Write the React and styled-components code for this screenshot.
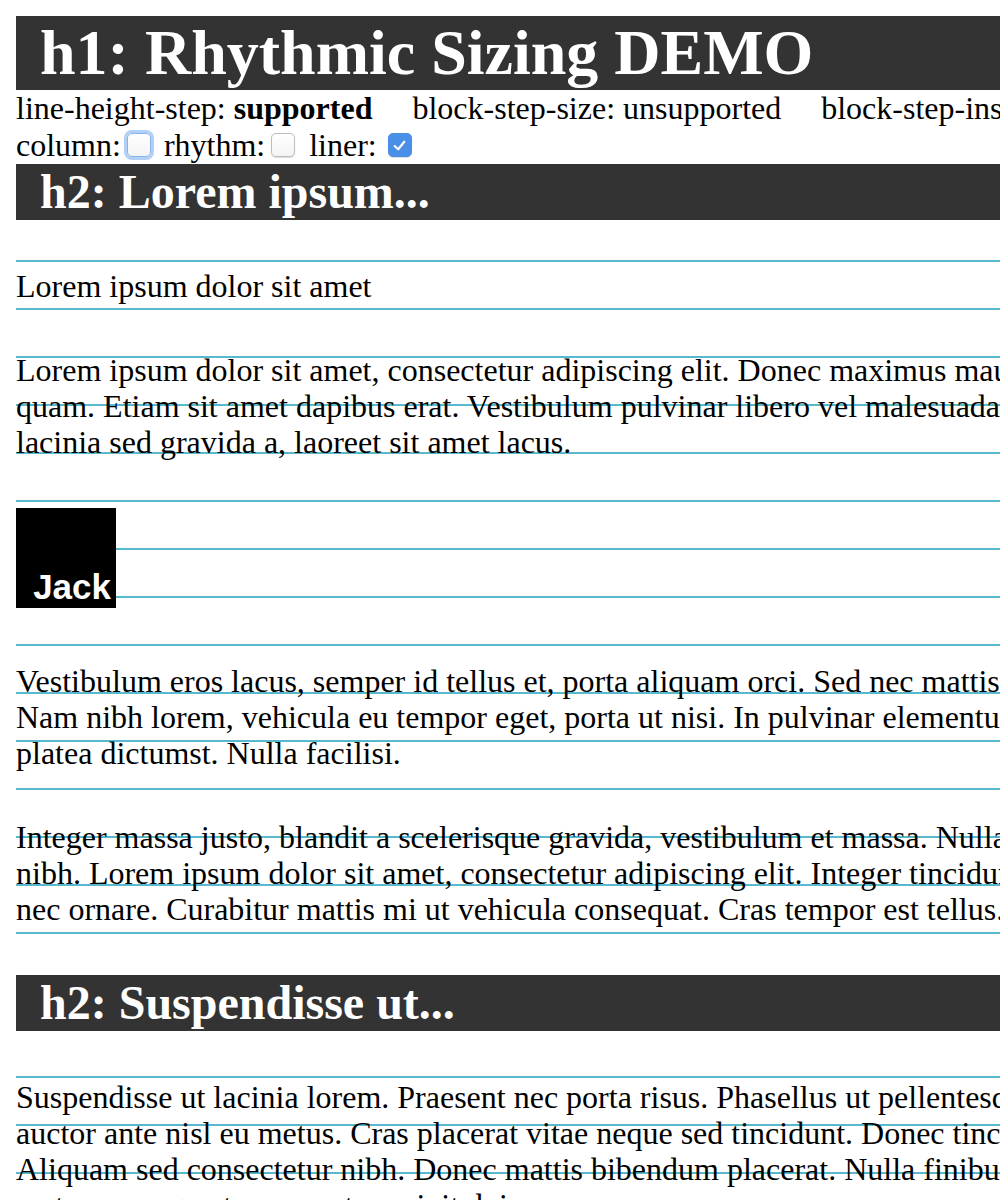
import React, { useState } from "react";
import styled, { createGlobalStyle } from "styled-components";

const GlobalStyle = createGlobalStyle`
  html, body {
    margin: 0;
    padding: 0;
    background: #ffffff;
    overflow-x: hidden;
  }
  body {
    font-family: "Liberation Serif", "Times New Roman", serif;
    font-size: 32px;
    color: #000;
  }
`;

const Page = styled.div`
  width: 1500px;
  padding: 16px 0 0 16px;
`;

const Title = styled.h1`
  margin: 0;
  padding: 0 24px;
  background: #333333;
  color: #ffffff;
  font-size: 64px;
  line-height: 74px;
  font-weight: bold;
  white-space: nowrap;
`;

const StatusRow = styled.div`
  display: flex;
  gap: 40px;
  line-height: 36px;
  white-space: nowrap;
`;

const ControlsRow = styled.div`
  display: flex;
  align-items: center;
  height: 38px;
  white-space: nowrap;
`;

const ControlLabel = styled.label`
  display: flex;
  align-items: center;
  margin-right: ${(p) => p.$after}px;
  cursor: pointer;
`;

const HiddenInput = styled.input`
  position: absolute;
  opacity: 0;
  width: 0;
  height: 0;
  margin: 0;
`;

const Box = styled.span`
  display: inline-flex;
  align-items: center;
  justify-content: center;
  box-sizing: border-box;
  width: 24px;
  height: 24px;
  margin-left: ${(p) => p.$gap}px;
  border-radius: 5px;
  border: 1px solid ${(p) => (p.$checked ? "#4a8fe7" : p.$focus ? "#86b4ee" : "#bdbdbd")};
  background: ${(p) => (p.$checked ? "#4a8fe7" : "linear-gradient(#ffffff, #f4f4f4)")};
  box-shadow: ${(p) => (p.$focus ? "0 0 0 3px rgba(126, 176, 240, 0.6)" : "0 0.5px 1px rgba(0,0,0,0.15)")};
`;

const Content = styled.div`
  background-image: linear-gradient(
    to bottom,
    transparent 0.5px,
    #58b9ce 0.5px,
    #58b9ce 2px,
    transparent 2px
  );
  background-size: 100% 48px;
  background-repeat: repeat-y;
  padding-bottom: 48px;
`;

const SectionTitle = styled.h2`
  margin: ${(p) => (p.$first ? "0" : "48px 0 0")};
  padding: 0 24px;
  background: #333333;
  color: #ffffff;
  font-size: 48px;
  line-height: 56px;
  font-weight: bold;
  white-space: nowrap;
`;

const Para = styled.p`
  margin: 48px 0 0;
  font-size: 32px;
  line-height: 36px;
  white-space: nowrap;
`;

const Picture = styled.span`
  display: inline-block;
  box-sizing: border-box;
  width: 100px;
  height: 100px;
  overflow: hidden;
  padding: 61px 5px 0 0;
  background: #000000;
  color: #ffffff;
  text-align: right;
  font-family: "Liberation Sans", Arial, sans-serif;
  font-weight: bold;
  font-size: 35px;
  line-height: 35px;
`;

function Check({ label, gap, after, checked, focus, onToggle }) {
  return (
    <ControlLabel $after={after}>
      {label}
      <HiddenInput type="checkbox" checked={checked} onChange={onToggle} />
      <Box $gap={gap} $checked={checked} $focus={focus}>
        {checked && (
          <svg width="15" height="15" viewBox="0 0 14 14" fill="none">
            <polyline
              points="2.5,7.5 5.8,10.5 11.5,3.5"
              stroke="#ffffff"
              strokeWidth="2"
              strokeLinecap="round"
              strokeLinejoin="round"
            />
          </svg>
        )}
      </Box>
    </ControlLabel>
  );
}

export default function App() {
  const [column, setColumn] = useState(false);
  const [rhythm, setRhythm] = useState(false);
  const [liner, setLiner] = useState(true);

  return (
    <>
      <GlobalStyle />
      <Page>
        <Title>h1: Rhythmic Sizing DEMO</Title>
        <StatusRow>
          <span>
            line-height-step: <b>supported</b>
          </span>
          <span>block-step-size: unsupported</span>
          <span>block-step-insert: unsupported</span>
          <span>block-step-align: unsupported</span>
        </StatusRow>
        <ControlsRow>
          <Check label="column:" gap={6} after={13} checked={column} focus onToggle={() => setColumn(!column)} />
          <Check label="rhythm:" gap={6} after={14} checked={rhythm} onToggle={() => setRhythm(!rhythm)} />
          <Check label="liner:" gap={11} after={0} checked={liner} onToggle={() => setLiner(!liner)} />
        </ControlsRow>
        <Content>
          <SectionTitle $first>h2: Lorem ipsum...</SectionTitle>
          <Para>Lorem ipsum dolor sit amet</Para>
          <Para>
            Lorem ipsum dolor sit amet, consectetur adipiscing elit. Donec maximus mauris vel tristique
            <br />
            quam. Etiam sit amet dapibus erat. Vestibulum pulvinar libero vel malesuada tincidunt, nunc
            <br />
            lacinia sed gravida a, laoreet sit amet lacus.
          </Para>
          <Para>
            <Picture>Jack</Picture>
          </Para>
          <Para>
            Vestibulum eros lacus, semper id tellus et, porta aliquam orci. Sed nec mattis dui.
            <br />
            Nam nibh lorem, vehicula eu tempor eget, porta ut nisi. In pulvinar elementum hac habitasse
            <br />
            platea dictumst. Nulla facilisi.
          </Para>
          <Para>
            Integer massa justo, blandit a scelerisque gravida, vestibulum et massa. Nullam a
            <br />
            nibh. Lorem ipsum dolor sit amet, consectetur adipiscing elit. Integer tincidunt lectus
            <br />
            nec ornare. Curabitur mattis mi ut vehicula consequat. Cras tempor est tellus.
          </Para>
          <SectionTitle>h2: Suspendisse ut...</SectionTitle>
          <Para>
            Suspendisse ut lacinia lorem. Praesent nec porta risus. Phasellus ut pellentesque
            <br />
            auctor ante nisl eu metus. Cras placerat vitae neque sed tincidunt. Donec tincidunt
            <br />
            Aliquam sed consectetur nibh. Donec mattis bibendum placerat. Nulla finibus sem
            <br />
            metus a congue tempor, ut suscipit dui.
          </Para>
        </Content>
      </Page>
    </>
  );
}
